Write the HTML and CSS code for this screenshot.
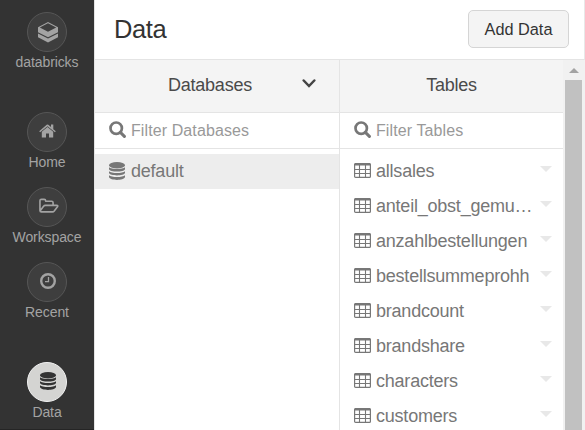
FILE: index.html
```html
<!DOCTYPE html>
<html lang="en">
<head>
<meta charset="utf-8">
<title>Data</title>
<link rel="stylesheet" href="styles.css">
</head>
<body>
<svg class="defs" width="0" height="0" aria-hidden="true">
  <symbol id="database" viewBox="0 0 16 18">
    <ellipse cx="8" cy="3.2" rx="8" ry="3.2"/>
    <path d="M0 5.2C2 7.6 14 7.6 16 5.2V7.2C15 10.3 1 10.3 0 7.2Z"/>
    <path d="M0 9.3C2 11.7 14 11.7 16 9.3V11.1C15 14.2 1 14.2 0 11.1Z"/>
    <path d="M0 13.2C2 15.6 14 15.6 16 13.2V15.1C15 18.9 1 18.9 0 15.1Z"/>
  </symbol>
  <symbol id="search" viewBox="0 0 17 17">
    <circle cx="7.2" cy="7.2" r="5.7" fill="none" stroke="currentColor" stroke-width="2.7"/>
    <path d="M11.4 11.4L15.4 15.4" fill="none" stroke="currentColor" stroke-width="3" stroke-linecap="round"/>
  </symbol>
  <symbol id="table" viewBox="0 0 17 15">
    <rect x=".6" y=".6" width="15.8" height="13.8" rx="1" fill="none" stroke="currentColor" stroke-width="1.2"/>
    <path d="M1 0H16L17 2.6H0Z"/>
    <path d="M5.5 2V14.5M11.5 2V14.5M.5 6.5H16.5M.5 10.5H16.5" fill="none" stroke="currentColor" stroke-width="1.1"/>
  </symbol>
</svg>
<div class="app">
  <nav class="sidebar">
    <a class="item brand"><span class="disc"><svg class="logo" width="20" height="21" viewBox="0 0 20 21"><path d="M10 0L20 5.2V10.2L10 15.2L0 10.2V5.2ZM10 1.2L1.8 5.5L10 9.8L18.2 5.5Z" fill-rule="evenodd"/><path d="M0 11.4L10 16.4L20 11.4V15.2L10 20.4L0 15.2Z"/></svg></span>databricks</a>
    <a class="item"><span class="disc"><svg class="home" width="17" height="14" viewBox="0 0 17 14"><path d="M8.5 3L14.2 7.7V13.4H10V9.4H7V13.4H2.8V7.7Z"/><path d="M12 .6H14.3V5.2L16.8 7.2L15.9 8.3L8.5 2.2L1.1 8.3L.2 7.2L7.7 .8Q8.5 .2 9.3 .8L12 3.1Z"/></svg></span>Home</a>
    <a class="item"><span class="disc"><svg class="folder" width="20" height="16" viewBox="0 0 21 16"><path d="M1 12.8V2.5Q1 1 2.5 1H5.5Q7 1 7 2.5V3H13.3Q14.8 3 14.8 4.5V7M1.3 13L4.8 8.2Q5.5 7.3 6.5 7.3H18.5Q20.4 7.3 19.4 8.7L16 13.2Q15.2 14.2 14.2 14.2H2.5Q1 14.2 1 12.7" fill="none" stroke="currentColor" stroke-width="1.7" stroke-linejoin="round"/></svg></span>Workspace</a>
    <a class="item"><span class="disc"><svg class="clock" width="16" height="16" viewBox="0 0 16 16"><circle cx="8" cy="8" r="6.8" fill="none" stroke="currentColor" stroke-width="2.4"/><path d="M8.5 4V8.6H5" fill="none" stroke="currentColor" stroke-width="1.3"/></svg></span>Recent</a>
    <a class="item active"><span class="disc"><svg width="16" height="18"><use href="#database"/></svg></span>Data</a>
  </nav>
  <main class="panel">
    <header class="top"><h1>Data</h1><button>Add Data</button></header>
    <div class="body">
      <section class="column databases">
        <h2>Databases<svg class="chevron" width="14" height="9" viewBox="0 0 14 9"><path d="M1.7 1.5L7 7L12.3 1.5" fill="none" stroke="currentColor" stroke-width="2.5" stroke-linecap="round"/></svg></h2>
        <div class="filter"><svg width="17" height="17"><use href="#search"/></svg>Filter Databases</div>
        <ul><li class="selected"><svg width="16" height="18"><use href="#database"/></svg><span>default</span></li></ul>
      </section>
      <section class="column tables">
        <h2>Tables</h2>
        <div class="filter"><svg width="17" height="17"><use href="#search"/></svg>Filter Tables</div>
        <ul>
          <li><svg width="17" height="15"><use href="#table"/></svg><span>allsales</span><i></i></li>
          <li><svg width="17" height="15"><use href="#table"/></svg><span>anteil_obst_gemu…</span><i></i></li>
          <li><svg width="17" height="15"><use href="#table"/></svg><span>anzahlbestellungen</span><i></i></li>
          <li><svg width="17" height="15"><use href="#table"/></svg><span>bestellsummeprohh</span><i></i></li>
          <li><svg width="17" height="15"><use href="#table"/></svg><span>brandcount</span><i></i></li>
          <li><svg width="17" height="15"><use href="#table"/></svg><span>brandshare</span><i></i></li>
          <li><svg width="17" height="15"><use href="#table"/></svg><span>characters</span><i></i></li>
          <li><svg width="17" height="15"><use href="#table"/></svg><span>customers</span><i></i></li>
        </ul>
      </section>
      <div class="scrollbar"><b></b><div class="thumb"></div></div>
    </div>
  </main>
</div>
</body>
</html>
```

FILE: styles.css
```css
* { box-sizing: border-box; }
body { margin: 0; font-family: "Liberation Sans", Arial, sans-serif; overflow: hidden; }
svg { fill: currentColor; flex: none; }
.defs { position: absolute; }
.app { display: flex; height: 430px; }
.sidebar {
  width: 94px; flex: none; padding-top: 12px; background: #333; color: #a3a3a3;
  display: flex; flex-direction: column; border-bottom: 1px solid #252525;
}
.item {
  display: flex; flex-direction: column; align-items: center; height: 75px; flex: none;
  font-size: 14px; letter-spacing: -0.1px; line-height: 20px;
}
.brand { margin-bottom: 25px; }
.active { margin-top: 25px; height: 60px; }
.disc {
  width: 40px; height: 40px; border-radius: 50%; border: 1px solid #565656; background: #3e3e3e;
  display: flex; align-items: center; justify-content: center;
}
.logo { margin-left: 2px; }
.home { margin: 0 0 3px 1px; }
.clock { margin: 0 0 3px 2px; }
.folder { margin: 0 0 3px 4px; }
.active .disc { background: #d4d4d2; border: 1px solid #f2f2f2; color: #333; }
.active svg { margin: 0 0 2px 2px; }
.panel { flex: 1; min-width: 0; border-left: 1px solid #e4e4e4; display: flex; flex-direction: column; background: #fff; }
.top {
  height: 60px; flex: none; display: flex; align-items: center; justify-content: space-between;
  padding: 0 15px 1px 19px; border-bottom: 1px solid #e4e4e4; border-right: 1px solid #e8e8e8;
}
h1 { margin: 0; font-size: 25.5px; letter-spacing: -0.4px; line-height: 30px; font-weight: 400; color: #333; }
button {
  width: 101px; height: 38px; padding: 0; border: 1px solid #d5d5d5; border-radius: 5px;
  background: #f4f4f4; color: #333; font: 16.3px "Liberation Sans", Arial, sans-serif;
}
.body { flex: 1; min-height: 0; display: flex; }
.column { overflow: hidden; }
.databases { width: 245px; border-right: 1px solid #e4e4e4; }
.tables { width: 223px; }
h2 {
  margin: 0; height: 53px; display: flex; align-items: center; justify-content: center;
  padding-bottom: 2px; background: #f4f4f4; border-bottom: 1px solid #e4e4e4;
  color: #4a4a4a; font-size: 18px; letter-spacing: -0.22px; font-weight: 400; line-height: 20px;
}
.databases h2 { justify-content: flex-end; padding-right: 23px; }
.chevron { margin: 0 0 3px 50px; color: #444; }
.filter {
  height: 36px; display: flex; align-items: center; gap: 5px; padding-left: 14px;
  border-bottom: 1px solid #e4e4e4; color: #999; font-size: 16px; letter-spacing: 0.1px;
}
.filter svg { color: #777; margin-bottom: 2px; }
ul { list-style: none; margin: 0; padding: 5px 0 0; }
li {
  height: 35px; display: flex; align-items: center; gap: 5px; padding: 0 12px 2px 14px;
  color: #777; font-size: 18px; letter-spacing: -0.22px; line-height: 22px; white-space: nowrap;
}
.selected { background: #ededed; gap: 6px; }
.tables li { padding-right: 11px; }
.tables li svg { margin-bottom: 1px; }
.tables li span { flex: 1; min-width: 0; }
i { border: 6px solid transparent; border-top: 6px solid #e8e8e8; border-bottom: 0; margin-bottom: 4px; flex: none; }
.scrollbar { width: 22px; background: #f1f1f1; padding: 8px 3px 0 2px; display: flex; flex-direction: column; align-items: center; }
b { border: 5px solid transparent; border-bottom: 5px solid #a3a3a3; border-top: 0; margin-bottom: 7px; }
.thumb { flex: 1; align-self: stretch; background: #c1c1c1; }
```
